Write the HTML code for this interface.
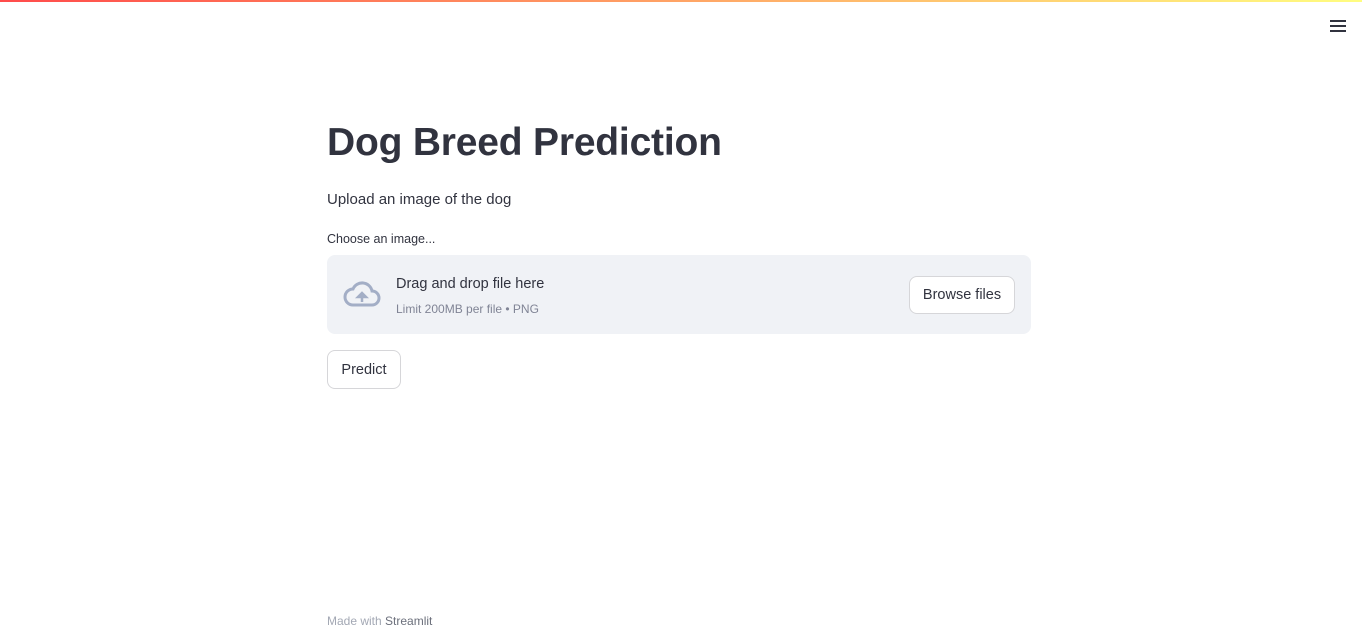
<!DOCTYPE html>
<html><head><style>
body{margin:0;width:1362px;height:642px;background:#fff;font-family:"Liberation Sans",sans-serif;color:#31333f;position:relative;overflow:hidden}
.bar{position:absolute;top:0;left:0;right:0;height:2px;background:linear-gradient(90deg,#ff4b4b,#fffd80)}
.menu{position:absolute;left:1330px;top:20px;width:16px}
.menu i{display:block;height:2px;background:#31333f;margin-bottom:3px}
h1{position:absolute;left:327px;top:121px;margin:0;font-size:39px;font-weight:700;letter-spacing:-0.2px}
.p{position:absolute;left:327px;top:191px;font-size:15px}
.lbl{position:absolute;left:327px;top:232px;font-size:12.5px}
.drop{position:absolute;left:327px;top:255px;width:704px;height:79px;background:#f0f2f6;border-radius:8px}
.t1{position:absolute;left:69px;top:21px;font-size:14.5px}
.t2{position:absolute;left:69px;top:47px;font-size:12px;color:#808495}
.btn{position:absolute;background:#fff;border:1px solid #d6d6d9;border-radius:8px;font-size:14.5px;box-sizing:border-box;display:flex;align-items:center;justify-content:center}
.foot{position:absolute;left:327px;top:614px;font-size:12px;color:#a3a8b4}
.foot span{color:#6b6f7b}
</style></head><body>
<div class="bar"></div>
<div class="menu"><i></i><i></i><i></i></div>
<h1>Dog Breed Prediction</h1>
<div class="p">Upload an image of the dog</div>
<div class="lbl">Choose an image...</div>
<div class="drop">
<svg style="position:absolute;left:16px;top:25px" width="38" height="30" viewBox="0 0 38 30"><path d="M10 25 H29 A7 7 0 0 0 29 11 A10 10 0 0 0 10 9 A8 8 0 0 0 10 25 Z" fill="none" stroke="#a3aec6" stroke-width="3"/><path d="M19 22 V15 M15 17 L19 13 L23 17 Z" stroke="#a3aec6" stroke-width="2.5" fill="#a3aec6"/></svg>
<div class="t1">Drag and drop file here</div>
<div class="t2">Limit 200MB per file • PNG</div>
<div class="btn" style="left:582px;top:21px;width:106px;height:38px">Browse files</div>
</div>
<div class="btn" style="left:327px;top:350px;width:74px;height:39px">Predict</div>
<div class="foot">Made with <span>Streamlit</span></div>
</body></html>
